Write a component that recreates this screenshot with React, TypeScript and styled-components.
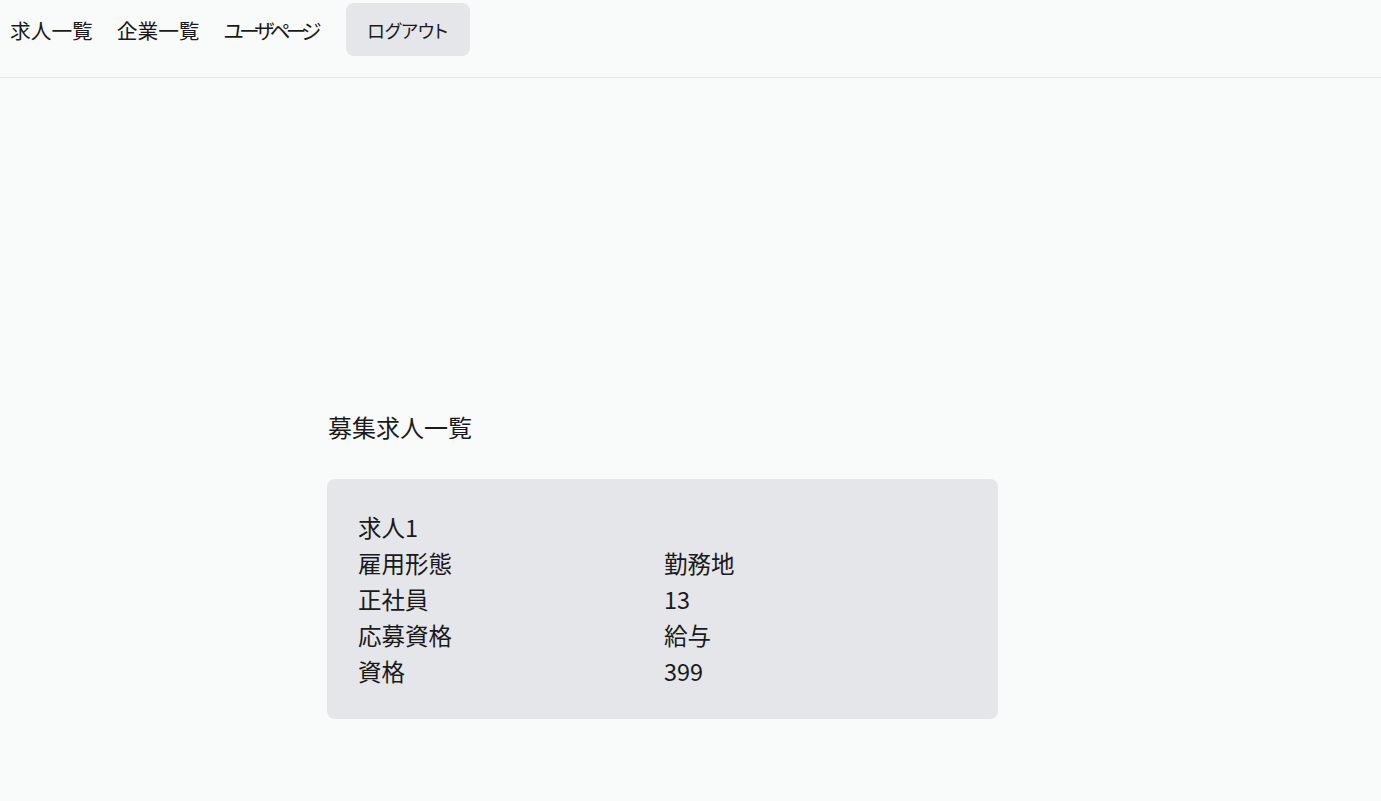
import React from "react"
import styled, { createGlobalStyle } from "styled-components"

const GlobalStyle = createGlobalStyle`
    html, body {
        margin: 0;
        padding: 0;
        background: #f9fafa;
        color: #1a1a1a;
        font-family: "Noto Sans CJK JP", "Noto Sans", sans-serif;
    }
`

const jobs = [
    {
        title: "求人1",
        rows: [
            ["雇用形態", "勤務地"],
            ["正社員", "13"],
            ["応募資格", "給与"],
            ["資格", "399"],
        ],
    },
]

const App = () => {
    return (
        <>
            <GlobalStyle />
            <Header>
                <NavLink>求人一覧</NavLink>
                <NavLink>企業一覧</NavLink>
                <NavLink kana>ユーザページ</NavLink>
                <LogoutButton>ログアウト</LogoutButton>
            </Header>
            <Main>
                <Title>募集求人一覧</Title>
                {jobs.map((job) => (
                    <Card key={job.title}>
                        <CardTitle>{job.title}</CardTitle>
                        <Grid>
                            {job.rows.flat().map((cell, i) => (
                                <Cell key={i}>{cell}</Cell>
                            ))}
                        </Grid>
                    </Card>
                ))}
            </Main>
        </>
    )
}

const Header = styled.header`
    height: 78px;
    box-sizing: border-box;
    padding: 3px 0 0 10px;
    display: flex;
    align-items: flex-start;
    gap: 24px;
    border-bottom: 1px solid #e3e5e8;
`

const NavLink = styled.a<{ kana?: boolean }>`
    font-size: 20.7px;
    line-height: 55px;
    color: #1a1a1a;
    cursor: pointer;
    font-feature-settings: ${(p) => (p.kana ? '"palt"' : "normal")};
    letter-spacing: ${(p) => (p.kana ? "-4.7px" : "0")};
`

const LogoutButton = styled.button`
    height: 53px;
    width: 124px;
    padding: 0;
    margin-left: 5px;
    border: none;
    border-radius: 8px;
    background: #e5e6e9;
    font-family: inherit;
    font-size: 18px;
    color: #1a1a1a;
    font-feature-settings: "palt";
    cursor: pointer;
`

const Main = styled.main`
    padding: 331px 0 60px 327px;
`

const Title = styled.h2`
    margin: 0 0 34px 1px;
    font-size: 24px;
    font-weight: 400;
    line-height: 36px;
`

const Card = styled.div`
    width: 671px;
    box-sizing: border-box;
    padding: 30px 31px 30px;
    background: #e5e6ea;
    border-radius: 8px;
    font-size: 23.5px;
    line-height: 36px;
`

const CardTitle = styled.div``

const Grid = styled.div`
    display: grid;
    grid-template-columns: 306px 1fr;
`

const Cell = styled.div``

export default App
